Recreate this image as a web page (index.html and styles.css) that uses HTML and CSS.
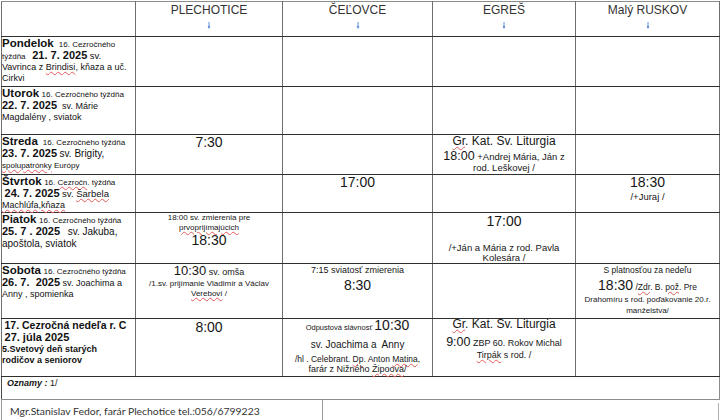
FILE: index.html
```html
<!DOCTYPE html>
<html lang="sk">
<head>
<meta charset="utf-8">
<title>Rozpis bohoslužieb</title>
<link rel="stylesheet" href="styles.css">
</head>
<body>
<div class="page">
<table class="rozpis">
<colgroup>
<col class="c-day"><col class="c-ple"><col class="c-cel"><col class="c-egr"><col class="c-rus">
</colgroup>
<tr class="r-head">
<td></td>
<td class="place"><div class="pl-name">PLECHOTICE</div><svg class="arrow" viewBox="0 0 4 7" width="4" height="7"><path d="M2 0V5" stroke="#4a7fd1" stroke-width="0.9"/><path d="M0.6 4.3H3.4L2 7Z" fill="#4a7fd1"/></svg></td>
<td class="place"><div class="pl-name">ČEĽOVCE</div><svg class="arrow" viewBox="0 0 4 7" width="4" height="7"><path d="M2 0V5" stroke="#4a7fd1" stroke-width="0.9"/><path d="M0.6 4.3H3.4L2 7Z" fill="#4a7fd1"/></svg></td>
<td class="place"><div class="pl-name">EGREŠ</div><svg class="arrow" viewBox="0 0 4 7" width="4" height="7"><path d="M2 0V5" stroke="#4a7fd1" stroke-width="0.9"/><path d="M0.6 4.3H3.4L2 7Z" fill="#4a7fd1"/></svg></td>
<td class="place"><div class="pl-name">Malý RUSKOV</div><svg class="arrow" viewBox="0 0 4 7" width="4" height="7"><path d="M2 0V5" stroke="#4a7fd1" stroke-width="0.9"/><path d="M0.6 4.3H3.4L2 7Z" fill="#4a7fd1"/></svg></td>
</tr>

<tr class="r-pon">
<td class="day">
<div class="d1"><b class="dn">Pondelok</b>&nbsp; <span class="f8">16. Cezročného</span></div>
<div class="d2"><span class="f8">týždňa&nbsp;&nbsp; </span><b class="dt">21. 7. 2025</b> <span class="f9h">sv.</span></div>
<div class="d3">Vavrinca z <span class="sp">Brindisi</span>, kňaza a uč.</div>
<div class="d4">Cirkvi</div>
</td>
<td></td><td></td><td></td><td></td>
</tr>

<tr class="r-uto">
<td class="day">
<div class="d1"><b class="dn">Utorok</b> <span class="f8">16. Cezročného týždňa</span></div>
<div class="d2"><b class="dt">22. 7. 2025</b>&nbsp; sv. Márie</div>
<div class="d3">Magdalény , sviatok</div>
</td>
<td></td><td></td><td></td><td></td>
</tr>

<tr class="r-str">
<td class="day">
<div class="d1"><b class="dn">Streda</b>&nbsp; <span class="f8">16. Cezročného týždňa</span></div>
<div class="d2"><b class="dt">23. 7. 2025</b> <span class="f10">sv. Brigity,</span></div>
<div class="d3 f8"><span class="sp">spolupatrónky</span> Európy</div>
</td>
<td class="ev"><div class="ln f14 lh14">7:30</div></td>
<td></td>
<td class="ev">
<div class="ln f12 lh13"><span class="sp">Gr</span>. Kat. Sv. Liturgia</div>
<div class="ln f9h lh11 mt3"><span class="f12h">18:00</span> +Andrej Mária, Ján z</div>
<div class="ln f9h lh11">rod. Leškovej /</div>
</td>
<td></td>
</tr>

<tr class="r-stv">
<td class="day">
<div class="d1"><b class="dn">Štvrtok</b> <span class="f8">16. <span class="sp">Cezročn</span>. týždňa</span></div>
<div class="d2">&nbsp;<b class="dt">24. 7. 2025</b> <span class="f9h">sv. <span class="sp">Šarbela</span></span></div>
<div class="d3"><span class="sp">Machlúfa,kňaza</span></div>
</td>
<td></td>
<td class="ev"><div class="ln f14 lh14">17:00</div></td>
<td></td>
<td class="ev">
<div class="ln f14 lh14">18:30</div>
<div class="ln f9h lh11 mt2">/+Juraj /</div>
</td>
</tr>

<tr class="r-pia">
<td class="day">
<div class="d1"><b class="dn">Piatok</b> <span class="f8">16. Cezročného týždňa</span></div>
<div class="d2"><b class="dt">25. 7 . 2025</b>&nbsp;&nbsp; <span class="f10">sv. Jakuba,</span></div>
<div class="d3 f10">apoštola, sviatok</div>
</td>
<td class="ev">
<div class="ln f8 lh9h">18:00 sv. zmierenia pre</div>
<div class="ln f8 lh9h"><span class="sp">prvoprijímajúcich</span></div>
<div class="ln f14 lh16">18:30</div>
</td>
<td></td>
<td class="ev">
<div class="ln f14 lh14 mt1">17:00</div>
<div class="ln f9h lh10 mt15">/+Ján a Mária z rod. Pavla</div>
<div class="ln f9h lh9">Kolesára /</div>
</td>
<td></td>
</tr>

<tr class="r-sob">
<td class="day">
<div class="d1"><b class="dn">Sobota</b> <span class="f8">16. Cezročného týždňa</span></div>
<div class="d2"><b class="dt">26. 7.&nbsp; 2025</b> sv. Joachima a</div>
<div class="d3">Anny , spomienka</div>
</td>
<td class="ev">
<div class="ln f9 lh14"><span class="f13">10:30</span> sv. omša</div>
<div class="ln f8 lh10 mt1">/1.sv. prijímanie Vladimír a Václav</div>
<div class="ln f8 lh10"><span class="sp">Vereboví</span> /</div>
</td>
<td class="ev">
<div class="ln f9 lh10 mt1">7:15 sviatosť zmierenia</div>
<div class="ln f14 lh16 mt2">8:30</div>
</td>
<td></td>
<td class="ev">
<div class="ln f8h lh10 mt1">S platnosťou za nedeľu</div>
<div class="ln f8h lh16 mt2"><span class="f14">18:30</span> /<span class="sp">Zdr</span>. B. <span class="sp">pož</span>. Pre</div>
<div class="ln f8 lh10h mt2">Drahomíru s rod. poďakovanie 20.r.</div>
<div class="ln f8 lh10h">manželstva/</div>
</td>
</tr>

<tr class="r-ned">
<td class="day">
<div class="d1">&nbsp;<b class="dn2">17. Cezročná nedeľa r. C</b></div>
<div class="d2">&nbsp;<b class="dt">27. júla 2025</b></div>
<div class="d3"><b>5.Svetový deň starých</b></div>
<div class="d4"><b>rodičov a seniorov</b></div>
</td>
<td class="ev"><div class="ln f14 lh14 mt1">8:00</div></td>
<td class="ev">
<div class="ln f7h lh13">Odpustová slávnosť <span class="f14">10:30</span></div>
<div class="ln f10 lh12 mt7">sv. Joachima a&nbsp; Anny</div>
<div class="ln f8h lh10 mt3">/hl . Celebrant. <span class="sp">Dp</span>. Anton <span class="sp">Matina</span>,</div>
<div class="ln f9 lh10">farár z Nižného <span class="sp">Žipoova</span>/</div>
</td>
<td class="ev">
<div class="ln f12 lh11"><span class="sp">Gr</span>. Kat. Sv. Liturgia</div>
<div class="ln f9 lh14 mt5"><span class="f12h">9:00</span> ZBP 60. Rokov Michal</div>
<div class="ln f9 lh11 mt1"><span class="sp">Tirpák</span> s rod. /</div>
</td>
<td></td>
</tr>

<tr class="r-ozn">
<td colspan="5" class="ozn"><b><i>Oznamy :</i></b> 1/</td>
</tr>
</table>

<div class="footer">
<div class="f-left">Mgr.Stanislav Fedor, farár Plechotice tel.:056/6799223</div>
<div class="f-right"></div>
</div>
</div>
</body>
</html>
```

FILE: styles.css
```css
html, body {
  margin: 0;
  padding: 0;
  background: #ffffff;
}

body {
  width: 720px;
  height: 420px;
  overflow: hidden;
  font-family: "Liberation Sans", Arial, sans-serif;
  color: #161616;
}

.page {
  padding: 1px 0 0 1px;
}

.rozpis {
  border-collapse: collapse;
  table-layout: fixed;
  width: 718px;
}

.rozpis td {
  border-top: 1px solid #2f2f2f;
  border-bottom: 1px solid #2f2f2f;
  border-left: 1px solid #6e6e6e;
  border-right: 1px solid #6e6e6e;
  padding: 0;
  vertical-align: top;
  white-space: nowrap;
  font-size: 9px;
  line-height: 11px;
}

.r-head td {
  border-top-color: #8c8c8c;
}

.c-day { width: 134px; }
.c-ple { width: 147px; }
.c-cel { width: 150px; }
.c-egr { width: 143px; }
.c-rus { width: 144px; }

.r-head { height: 35px; }
.r-pon { height: 50px; }
.r-uto { height: 48px; }
.r-str { height: 40px; }
.r-stv { height: 38px; }
.r-pia { height: 51px; }
.r-sob { height: 55px; }
.r-ned { height: 58px; }
.r-ozn { height: 23px; }

/* header */
.place {
  text-align: center;
  color: #333333;
}

.pl-name {
  font-size: 12px;
  line-height: 14px;
  margin-top: 1px;
}

.arrow {
  display: block;
  margin: 5px auto 0;
}

/* day column */
.day {
  font-size: 9px;
  color: #111111;
}

.d1, .d2, .d3, .d4 {
  white-space: nowrap;
}

.d1 { height: 12px; line-height: 12px; }
.d2 { height: 12.5px; line-height: 12.5px; }
.d3 { height: 11.5px; line-height: 11.5px; }
.d4 { height: 11px; line-height: 11px; }

.dn {
  font-size: 11.5px;
  font-weight: bold;
}

.dn2 {
  font-size: 10.5px;
  font-weight: bold;
}

.dt {
  font-size: 11px;
  font-weight: bold;
}

/* events */
.ev {
  text-align: center;
  color: #161616;
}

.ln {
  white-space: nowrap;
}

.f7h { font-size: 7.5px; }
.f8 { font-size: 8px; }
.f8h { font-size: 8.5px; }
.f9 { font-size: 9px; }
.f9h { font-size: 9.5px; }
.f10 { font-size: 10px; }
.f12 { font-size: 12px; }
.f12h { font-size: 12.5px; }
.f13 { font-size: 13px; }
.f14 { font-size: 14px; }

.lh9 { line-height: 9px; height: 9px; }
.lh9h { line-height: 9.5px; height: 9.5px; }
.lh10 { line-height: 10px; height: 10px; }
.lh10h { line-height: 10.5px; height: 10.5px; }
.lh11 { line-height: 11px; height: 11px; }
.lh12 { line-height: 12px; height: 12px; }
.lh13 { line-height: 13px; height: 13px; }
.lh14 { line-height: 14px; height: 14px; }
.lh16 { line-height: 16px; height: 16px; }

.mt1 { margin-top: 1px; }
.mt2 { margin-top: 2px; }
.mt3 { margin-top: 3px; }
.mt5 { margin-top: 5px; }
.mt7 { margin-top: 7px; }
.mt15 { margin-top: 15px; }

.sp {
  text-decoration: underline wavy #e25a5a;
  text-decoration-thickness: 0.6px;
  text-underline-offset: 1px;
}

/* announcements */
.ozn {
  font-size: 9px;
  line-height: 10px;
  padding: 1px 0 0 5px !important;
  border-bottom-color: #8c8c8c !important;
  border-left-color: #4a4a4a !important;
  border-right-color: #8c8c8c !important;
}

/* footer */
.footer {
  display: flex;
  width: 718px;
  height: 24px;
}

.f-left {
  width: 312px;
  padding: 5px 0 0 8px;
  border-left: 1px solid #9a9a9a;
  border-right: 1px solid #9a9a9a;
  font-family: Lato, "Liberation Sans", sans-serif;
  font-size: 10.4px;
  line-height: 12px;
  color: #333333;
  white-space: nowrap;
}

.f-right {
  flex: 1;
  border-right: 1px solid #b0b0b0;
  margin-top: 3px;
}
```
